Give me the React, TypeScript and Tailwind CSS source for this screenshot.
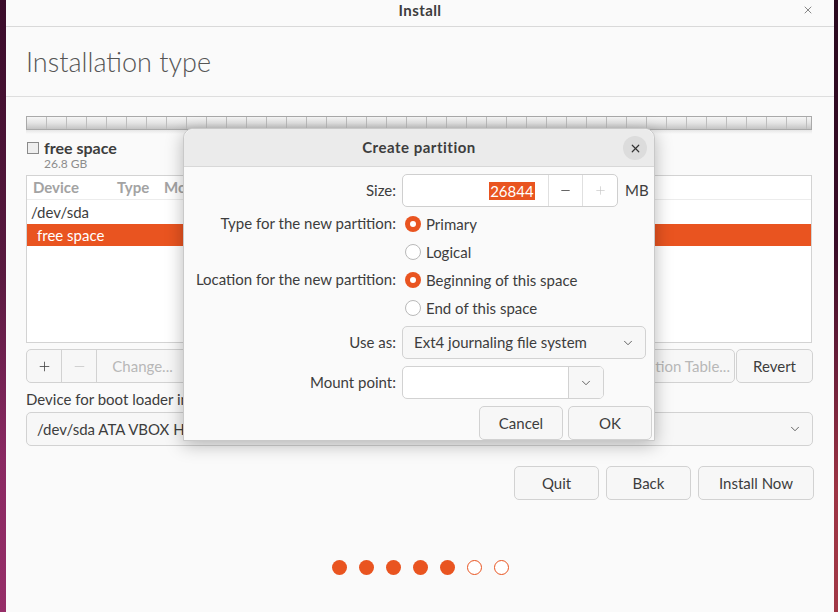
import React from "react"
import { ChevronDown, X, Plus, Minus } from "lucide-react"

const font = "font-['Lato','Noto_Sans',sans-serif]"

function Radio({ checked, label }: { checked?: boolean; label: string }) {
  return (
    <div className="flex h-[28px] items-center">
      <div className="ml-[3px] flex w-[16px] h-[16px] items-center justify-center">
        {checked ? (
          <div className="flex h-[16px] w-[16px] items-center justify-center rounded-full bg-[#e95420]">
            <div className="h-[6px] w-[6px] rounded-full bg-white" />
          </div>
        ) : (
          <div className="h-[16px] w-[16px] rounded-full border border-[#b9b9b9] bg-white" />
        )}
      </div>
      <span className="ml-[5px] text-[15px] text-[#3d3d3d]">{label}</span>
    </div>
  )
}

function Btn({ label, w, disabled }: { label: string; w: string; disabled?: boolean }) {
  return (
    <button
      className={`${w} h-[34px] rounded-[5px] border border-[#d2d2d2] bg-[#f7f7f7] text-[15px] ${
        disabled ? "text-[#b4b4b4]" : "text-[#3d3d3d]"
      }`}
    >
      {label}
    </button>
  )
}

function CreatePartition() {
  return (
    <div className="absolute left-[183px] top-[128px] h-[313px] w-[472px] rounded-t-[10px] border border-[#c9c9c9] bg-[#fafafa] shadow-[0_4px_18px_rgba(0,0,0,0.28)]">
      <div className="relative flex h-[38px] items-center justify-center rounded-t-[10px] border-b border-[#d8d8d8] bg-[#ebebeb]">
        <span className="text-[15px] font-bold tracking-[0.5px] text-[#3d3d3d]">Create partition</span>
        <div className="absolute right-[7px] top-[7px] flex h-[24px] w-[24px] items-center justify-center rounded-full bg-[#dcdcdc]">
          <X size={13} strokeWidth={2.2} className="text-[#333]" />
        </div>
      </div>

      <div className="grid grid-cols-[212px_1fr] gap-x-[6px] pt-[7px]">
        {/* size */}
        <div className="flex h-[33px] items-center justify-end text-[15px] text-[#3d3d3d]">Size:</div>
        <div className="flex h-[33px] items-center">
          <div className="flex h-[33px] w-[216px] overflow-hidden rounded-[5px] border border-[#cfcfcf] bg-white">
            <div className="flex w-[146px] items-center justify-end pr-[13px]">
              <span className="bg-[#e95420] px-[1px] text-[15px] leading-[18px] text-white">26844</span>
            </div>
            <div className="flex w-[35px] items-center justify-center border-l border-[#e0e0e0]">
              <Minus size={13} strokeWidth={1.4} className="text-[#333]" />
            </div>
            <div className="flex w-[35px] items-center justify-center border-l border-[#e0e0e0]">
              <Plus size={13} strokeWidth={1.2} className="text-[#c4c4c4]" />
            </div>
          </div>
          <span className="ml-[7px] text-[15px] text-[#3d3d3d]">MB</span>
        </div>

        {/* type */}
        <div className="mt-[3px] flex h-[26px] items-center justify-end text-[15px] text-[#3d3d3d]">
          Type for the new partition:
        </div>
        <div className="mt-[3px] flex flex-col">
          <Radio checked label="Primary" />
          <Radio label="Logical" />
        </div>

        {/* location */}
        <div className="flex h-[26px] items-center justify-end text-[15px] text-[#3d3d3d]">
          Location for the new partition:
        </div>
        <div className="flex flex-col">
          <Radio checked label="Beginning of this space" />
          <Radio label="End of this space" />
        </div>

        {/* use as */}
        <div className="mt-[4px] flex h-[33px] items-center justify-end text-[15px] text-[#3d3d3d]">Use as:</div>
        <div className="mt-[4px] flex h-[33px] w-[244px] items-center justify-between rounded-[5px] border border-[#d2d2d2] bg-[#f7f7f7] pl-[11px] pr-[10px]">
          <span className="text-[15px] text-[#3d3d3d]">Ext4 journaling file system</span>
          <ChevronDown size={14} strokeWidth={1.4} className="text-[#444]" />
        </div>

        {/* mount point */}
        <div className="mt-[7px] flex h-[33px] items-center justify-end text-[15px] text-[#3d3d3d]">Mount point:</div>
        <div className="mt-[7px] flex h-[33px] w-[202px] overflow-hidden rounded-[5px] border border-[#d2d2d2] bg-white">
          <div className="flex-1" />
          <div className="flex w-[35px] items-center justify-center border-l border-[#d2d2d2] bg-[#f7f7f7]">
            <ChevronDown size={14} strokeWidth={1.4} className="text-[#444]" />
          </div>
        </div>
      </div>

      <div className="mt-[7px] flex justify-end gap-[5px] pr-[2px]">
        <Btn label="Cancel" w="w-[84px]" />
        <Btn label="OK" w="w-[84px]" />
      </div>
    </div>
  )
}

export default function App() {
  return (
    <div className={`relative flex h-[612px] w-[838px] overflow-hidden ${font}`}>
      <div className="h-full w-[6px] bg-[linear-gradient(to_bottom,#3a0c2a,#5a1a40_45%,#8a2962_75%,#962e68)]" />

      <div className="flex h-full w-[828px] flex-col bg-[#fafafa]">
        {/* title bar */}
        <div className="relative flex h-[27px] items-start justify-center border-b border-[#d9d9d9]">
          <span className="text-[15px] font-bold leading-[20px] tracking-[0.4px] text-[#3d3d3d]">Install</span>
          <X size={12} strokeWidth={1.4} className="absolute right-[20px] top-[4px] text-[#555]" />
        </div>

        {/* heading */}
        <div className="flex h-[70px] items-center border-b border-[#dedede] pl-[20px]">
          <h1 className="pt-[2px] text-[27px] font-light text-[#555]">Installation type</h1>
        </div>

        <div className="flex flex-col pl-[20px] pr-[22px] pt-[19px]">
          {/* partition bar */}
          <div className="flex h-[14px] w-[786px] overflow-hidden border border-[#a9a9a9] bg-[linear-gradient(to_bottom,#f6f6f6,#e4e4e4_50%,#c4c4c4)]">
            {Array.from({ length: 40 }).map((_, i) => (
              <div key={i} className="h-full w-[20px] shrink-0 border-r border-[#bdbdbd]" />
            ))}
          </div>
          <div className="h-[4px] w-[786px] bg-[linear-gradient(to_bottom,#e6e6e6,#fafafa)]" />

          {/* legend */}
          <div className="mt-[5px] flex h-[18px] items-center">
            <div className="ml-[1px] h-[12px] w-[12px] border border-[#8a8a8a] bg-[#eeeeee]" />
            <span className="ml-[5px] text-[16px] font-bold leading-[18px] text-[#3d3d3d]">free space</span>
          </div>
          <span className="ml-[18px] text-[12px] leading-[14px] text-[#8c8c8c]">26.8 GB</span>

          {/* tree */}
          <div className="mt-[4px] h-[168px] w-[786px] border border-[#d3d3d3] bg-white">
            <div className="flex h-[24px] items-center border-b border-[#ececec] text-[15px] font-bold text-[#a3a3a3]">
              <span className="ml-[6px] w-[84px]">Device</span>
              <span className="w-[47px]">Type</span>
              <span>Mount point</span>
            </div>
            <div className="flex h-[24px] items-center pl-[4px] text-[15px] text-[#3d3d3d]">/dev/sda</div>
            <div className="flex h-[22px] items-center bg-[#e95420] pl-[10px] text-[15px] text-white">free space</div>
          </div>

          {/* partition buttons */}
          <div className="mt-[6px] flex h-[34px] w-[787px] items-stretch">
            <div className="flex rounded-[5px] border border-[#d2d2d2] bg-[#f7f7f7]">
              <div className="flex w-[34px] items-center justify-center">
                <Plus size={15} strokeWidth={1.3} className="text-[#444]" />
              </div>
              <div className="flex w-[35px] items-center justify-center border-l border-[#d2d2d2]">
                <Minus size={15} strokeWidth={1.2} className="text-[#c4c4c4]" />
              </div>
              <div className="flex w-[92px] items-center justify-center border-l border-[#d2d2d2] text-[15px] text-[#b8b8b8]">
                Change...
              </div>
            </div>
            <div className="flex-1" />
            <div className="flex w-[150px] items-center justify-center rounded-[5px] border border-[#d2d2d2] bg-[#f7f7f7] text-[15px] text-[#b8b8b8]">
              New Partition Table...
            </div>
            <div className="ml-[1px] flex w-[77px] items-center justify-center rounded-[5px] border border-[#d2d2d2] bg-[#f7f7f7] text-[15px] text-[#3d3d3d]">
              Revert
            </div>
          </div>

          <span className="mt-[7px] text-[15px] leading-[18px] text-[#3d3d3d]">Device for boot loader installation:</span>

          <div className="mt-[4px] flex h-[34px] w-[787px] items-center justify-between rounded-[5px] border border-[#d2d2d2] bg-[#f7f7f7] pl-[10px] pr-[10px]">
            <span className="text-[15px] text-[#3d3d3d]">/dev/sda ATA VBOX HARDDISK (26.8 GB)</span>
            <ChevronDown size={14} strokeWidth={1.4} className="text-[#444]" />
          </div>

          {/* nav buttons */}
          <div className="mt-[20px] flex w-[788px] justify-end gap-[7px]">
            <Btn label="Quit" w="w-[85px]" />
            <Btn label="Back" w="w-[85px]" />
            <Btn label="Install Now" w="w-[116px]" />
          </div>

          {/* progress dots */}
          <div className="mt-[60px] flex justify-center gap-[12px] pl-[2px]">
            {[1, 1, 1, 1, 1, 0, 0].map((f, i) =>
              f ? (
                <div key={i} className="h-[15px] w-[15px] rounded-full bg-[#e95420]" />
              ) : (
                <div key={i} className="h-[15px] w-[15px] rounded-full border border-[#e95420] bg-white" />
              )
            )}
          </div>
        </div>
      </div>

      <div className="h-full w-[4px] bg-[linear-gradient(to_bottom,#2a0a1f,#3a0d28_40%,#6a1f3a_60%,#9c3444_80%,#a03846)]" />

      <CreatePartition />
    </div>
  )
}
